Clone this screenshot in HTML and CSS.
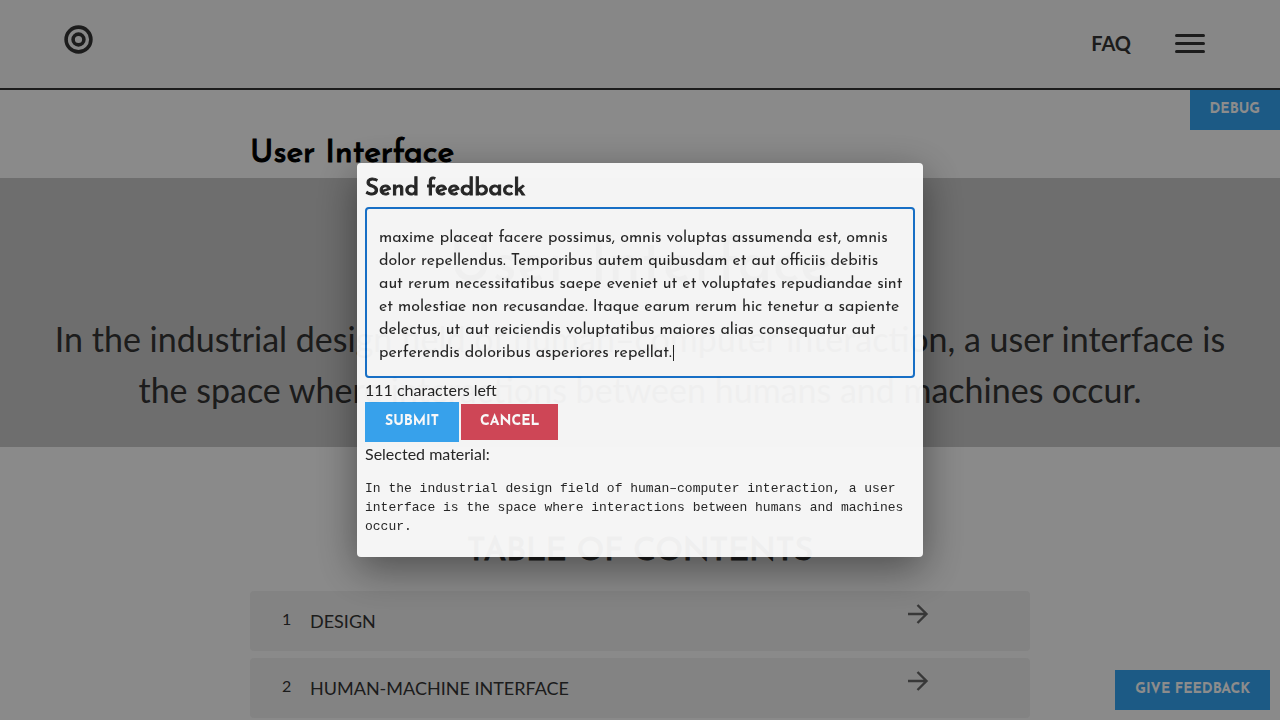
FILE: index.html
```html
<!DOCTYPE html>
<html lang="en">
<head>
<meta charset="utf-8">
<meta name="viewport" content="width=device-width, initial-scale=1">
<title>User Interface</title>
<link rel="stylesheet" href="styles.css">
</head>
<body>
<header class="topbar">
  <a class="logo" href="#" aria-label="Home">
    <svg width="30" height="30" viewBox="0 0 30 30" fill="none" stroke="currentColor" stroke-width="3.6"><circle cx="15.5" cy="15.5" r="12.4"/><circle cx="15.5" cy="15.5" r="5.4"/></svg>
  </a>
  <nav class="topnav">
    <a class="faq" href="#">FAQ</a>
    <button class="menu" type="button" aria-label="Menu"><span class="bar"></span><span class="bar"></span><span class="bar"></span></button>
  </nav>
</header>
<button class="btn debug" type="button">Debug</button>
<main>
  <h1 class="page-title">User Interface</h1>
  <section class="hero">
    <h2 class="hero-title">User Interface</h2>
    <p class="hero-text">In the industrial design field of human–computer interaction, a user interface is the space where interactions between humans and machines occur.</p>
  </section>
  <section class="toc">
    <h2 class="toc-title">Table of Contents</h2>
    <ol class="toc-list">
      <li><a class="toc-item" href="#"><span class="num">1</span><span class="name">Design</span><svg class="arrow" width="24" height="24" viewBox="0 0 24 24" fill="none" stroke="currentColor" stroke-width="2.4"><path d="M2 12H21M11.5 3L20.5 12L11.5 21"/></svg></a></li>
      <li><a class="toc-item" href="#"><span class="num">2</span><span class="name">Human-machine interface</span><svg class="arrow" width="24" height="24" viewBox="0 0 24 24" fill="none" stroke="currentColor" stroke-width="2.4"><path d="M2 12H21M11.5 3L20.5 12L11.5 21"/></svg></a></li>
    </ol>
  </section>
</main>
<button class="btn give" type="button">Give feedback</button>
<div class="overlay">
  <form class="dialog" role="dialog" aria-labelledby="dialog-title">
    <h2 class="dialog-title" id="dialog-title">Send feedback</h2>
    <div class="field">
      <textarea class="message" rows="6" aria-label="Feedback" autofocus>maxime placeat facere possimus, omnis voluptas assumenda est, omnis
dolor repellendus. Temporibus autem quibusdam et aut officiis debitis
aut rerum necessitatibus saepe eveniet ut et voluptates repudiandae sint
et molestiae non recusandae. Itaque earum rerum hic tenetur a sapiente
delectus, ut aut reiciendis voluptatibus maiores alias consequatur aut
perferendis doloribus asperiores repellat.</textarea>
      <span class="caret"></span>
    </div>
    <p class="note">111 characters left</p>
    <div class="actions">
      <button class="btn" type="submit">Submit</button>
      <button class="btn cancel" type="button">Cancel</button>
    </div>
    <p class="note">Selected material:</p>
    <pre class="quote">In the industrial design field of human–computer interaction, a user interface is the space where interactions between humans and machines occur.</pre>
  </form>
</div>
</body>
</html>
```
FILE: styles.css
```css
* { box-sizing: border-box; }
html, body { height: 100%; }
body {
  margin: 0;
  overflow: hidden;
  background: #fbfbfb;
  color: #333;
  font: 16px/24px Lato, sans-serif;
}
h1, h2, p, ol, pre { margin: 0; }
a { color: inherit; text-decoration: none; }

.topbar {
  display: flex;
  justify-content: space-between;
  height: 90px;
  padding: 0 75px 0 63px;
  background: #f6f6f6;
  border-bottom: 2px solid #333;
}
.logo { padding-top: 24px; }
.logo svg { display: block; }
.topnav { display: flex; align-items: center; gap: 44px; padding-bottom: 2px; }
.faq { font-size: 20px; font-weight: 700; }
.menu {
  display: flex;
  flex-direction: column;
  gap: 5px;
  width: 30px;
  padding: 0;
  border: 0;
  background: none;
}
.bar { height: 3px; border-radius: 2px; background: #333; }

.btn {
  height: 40px;
  padding: 0 20px;
  border: 0;
  background: #34a4f2;
  color: #fff;
  font: 700 14px/20px "Josefin Sans", Lato, sans-serif;
  text-transform: uppercase;
}
.debug { position: absolute; top: 90px; right: 0; }
.give { position: fixed; right: 10px; bottom: 10px; }

.page-title, .toc-title, .dialog-title {
  font-family: "Josefin Sans", Lato, sans-serif;
  font-weight: 400;
  -webkit-text-stroke: 1px currentColor;
}
.page-title {
  max-width: 780px;
  margin: 0 auto;
  padding: 44px 0 4px;
  color: #000;
  font-size: 32px;
  line-height: 40px;
}
.hero { padding: 50px 40px 32px; background: #c9c9c9; text-align: center; }
.hero-title { font: 400 60px/76px "Josefin Sans", Lato, sans-serif; }
.hero-text { margin-top: 9px; font-size: 34px; line-height: 51px; }

.toc { max-width: 780px; margin: 0 auto; padding-top: 85px; }
.toc-title {
  margin-bottom: 19px;
  font-size: 32px;
  line-height: 40px;
  text-align: center;
  text-transform: uppercase;
}
.toc-list { display: grid; gap: 7px; padding: 0; list-style: none; }
.toc-item {
  display: grid;
  grid-template-columns: 28px 1fr 24px;
  height: 60px;
  padding: 0 100px 0 32px;
  border-radius: 4px;
  background: #efefef;
}
.num { padding-top: 16px; }
.name { padding-top: 18px; font-size: 18px; text-transform: uppercase; }
.arrow { margin-top: 11px; color: #666; }

.overlay {
  position: fixed;
  inset: 0;
  display: grid;
  place-items: center;
  background: rgba(0, 0, 0, 0.45);
}
.dialog {
  width: 566px;
  max-width: 96%;
  padding: 8px;
  border-radius: 4px;
  background: #fbfbfb;
  box-shadow: 0 12px 40px rgba(0, 0, 0, 0.45);
  opacity: 0.95;
}
.dialog-title { padding-top: 2px; margin-bottom: 2px; color: #222; font-size: 24px; line-height: 32px; }
.field { position: relative; }
.message {
  display: block;
  width: 100%;
  padding: 18px 4px 11px 12px;
  border: 2px solid #126fca;
  border-radius: 4px;
  outline: 0;
  overflow: hidden;
  resize: none;
  background: transparent;
  color: #222;
  caret-color: transparent;
  font: 16px/23px "Josefin Sans", Lato, sans-serif;
}
.caret {
  position: absolute;
  left: 308px;
  bottom: 17px;
  width: 1px;
  height: 16px;
  background: #222;
}
.note { color: #222; }
.actions { display: flex; align-items: center; gap: 2px; }
.cancel { height: 36px; padding: 0 19px; background: #d34455; }
.quote {
  padding: 13px 0;
  color: #222;
  font: 13px/19px "Liberation Mono", monospace;
  white-space: pre-wrap;
}
```
